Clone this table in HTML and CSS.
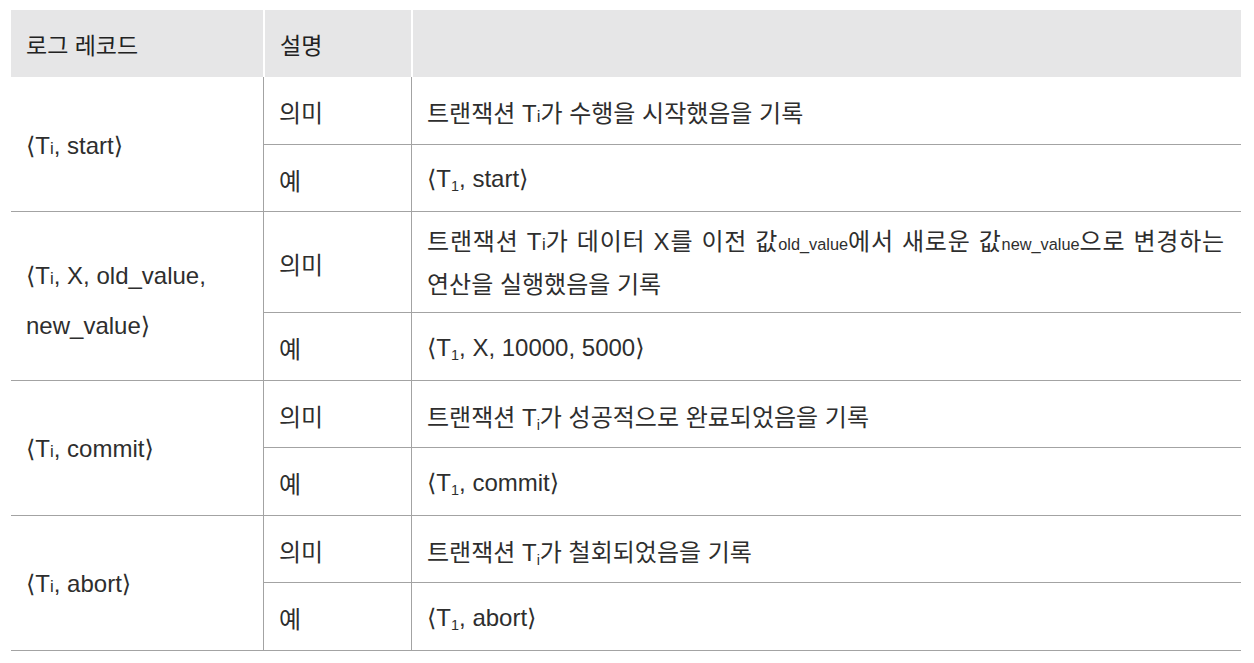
FILE: index.html
```html
<!DOCTYPE html>
<html lang="ko">
<head>
<meta charset="utf-8">
<title>로그 레코드</title>
<link rel="stylesheet" href="styles.css">
</head>
<body>
<table class="log-table">
  <colgroup>
    <col class="c-record">
    <col class="c-label">
    <col class="c-desc">
  </colgroup>
  <thead>
    <tr class="head-row">
      <th>로그 레코드</th>
      <th>설명</th>
      <th></th>
    </tr>
  </thead>
  <tbody>
    <tr class="row">
      <td class="record" rowspan="2">⟨T<span class="si">i</span>, start⟩</td>
      <td class="label">의미</td>
      <td class="desc">트랜잭션 T<span class="si">i</span>가 수행을 시작했음을 기록</td>
    </tr>
    <tr class="row">
      <td class="label">예</td>
      <td class="desc">⟨T<span class="sub">1</span>, start⟩</td>
    </tr>
    <tr class="row tall">
      <td class="record multi" rowspan="2">⟨T<span class="si">i</span>, X, old_value,<br>new_value⟩</td>
      <td class="label">의미</td>
      <td class="desc multi-desc">
        <span class="just-line">트랜잭션 T<span class="si">i</span>가 데이터 X를 이전 값<span class="small">old_value</span>에서 새로운 값<span class="small">new_value</span>으로 변경하는</span>
        <span class="plain-line">연산을 실행했음을 기록</span>
      </td>
    </tr>
    <tr class="row">
      <td class="label">예</td>
      <td class="desc">⟨T<span class="sub">1</span>, X, 10000, 5000⟩</td>
    </tr>
    <tr class="row">
      <td class="record" rowspan="2">⟨T<span class="si">i</span>, commit⟩</td>
      <td class="label">의미</td>
      <td class="desc">트랜잭션 T<span class="sub">i</span>가 성공적으로 완료되었음을 기록</td>
    </tr>
    <tr class="row">
      <td class="label">예</td>
      <td class="desc">⟨T<span class="sub">1</span>, commit⟩</td>
    </tr>
    <tr class="row">
      <td class="record" rowspan="2">⟨T<span class="si">i</span>, abort⟩</td>
      <td class="label">의미</td>
      <td class="desc">트랜잭션 T<span class="sub">i</span>가 철회되었음을 기록</td>
    </tr>
    <tr class="row">
      <td class="label">예</td>
      <td class="desc">⟨T<span class="sub">1</span>, abort⟩</td>
    </tr>
  </tbody>
</table>
</body>
</html>
```

FILE: styles.css
```css
html, body {
  margin: 0;
  padding: 0;
  background: #ffffff;
}

body {
  font-family: "Liberation Sans", "DejaVu Sans", "Noto Sans CJK KR", sans-serif;
  color: #2e2e2e;
}

.log-table {
  margin: 10px 0 0 11px;
  width: 1230px;
  table-layout: fixed;
  border-collapse: separate;
  border-spacing: 0;
  font-size: 24px;
}

.c-record { width: 252px; }
.c-label { width: 148px; }
.c-desc { width: 830px; }

.head-row {
  height: 67px;
}

.head-row th {
  background: #e6e6e7;
  text-align: left;
  font-weight: 400;
  font-size: 23px;
  color: #222222;
  padding: 0 0 0 15px;
  vertical-align: middle;
}

.head-row th + th {
  border-left: 2px solid #ffffff;
}

.row {
  height: 67.5px;
}

.row.tall {
  height: 101px;
}

.row td {
  padding: 3px 15px 0 15px;
  border-bottom: 1.5px solid #a3a3a3;
  vertical-align: middle;
  white-space: nowrap;
}

.row td.label,
.row td.desc {
  border-left: 1.5px solid #a3a3a3;
}

.row td.desc {
  padding-right: 16px;
}

.row td.record.multi {
  line-height: 47px;
  padding-top: 10px;
}

.multi-desc {
  line-height: 40px;
}

.just-line {
  display: block;
  text-align: justify;
  text-align-last: justify;
  letter-spacing: 0.8px;
}

.just-line .small,
.just-line .si {
  letter-spacing: 0;
}

.plain-line {
  display: block;
}

.si {
  font-size: 0.7em;
}

.sub {
  font-size: 0.6em;
  vertical-align: -0.3em;
  line-height: 0;
}

.small {
  font-size: 0.68em;
}
```
